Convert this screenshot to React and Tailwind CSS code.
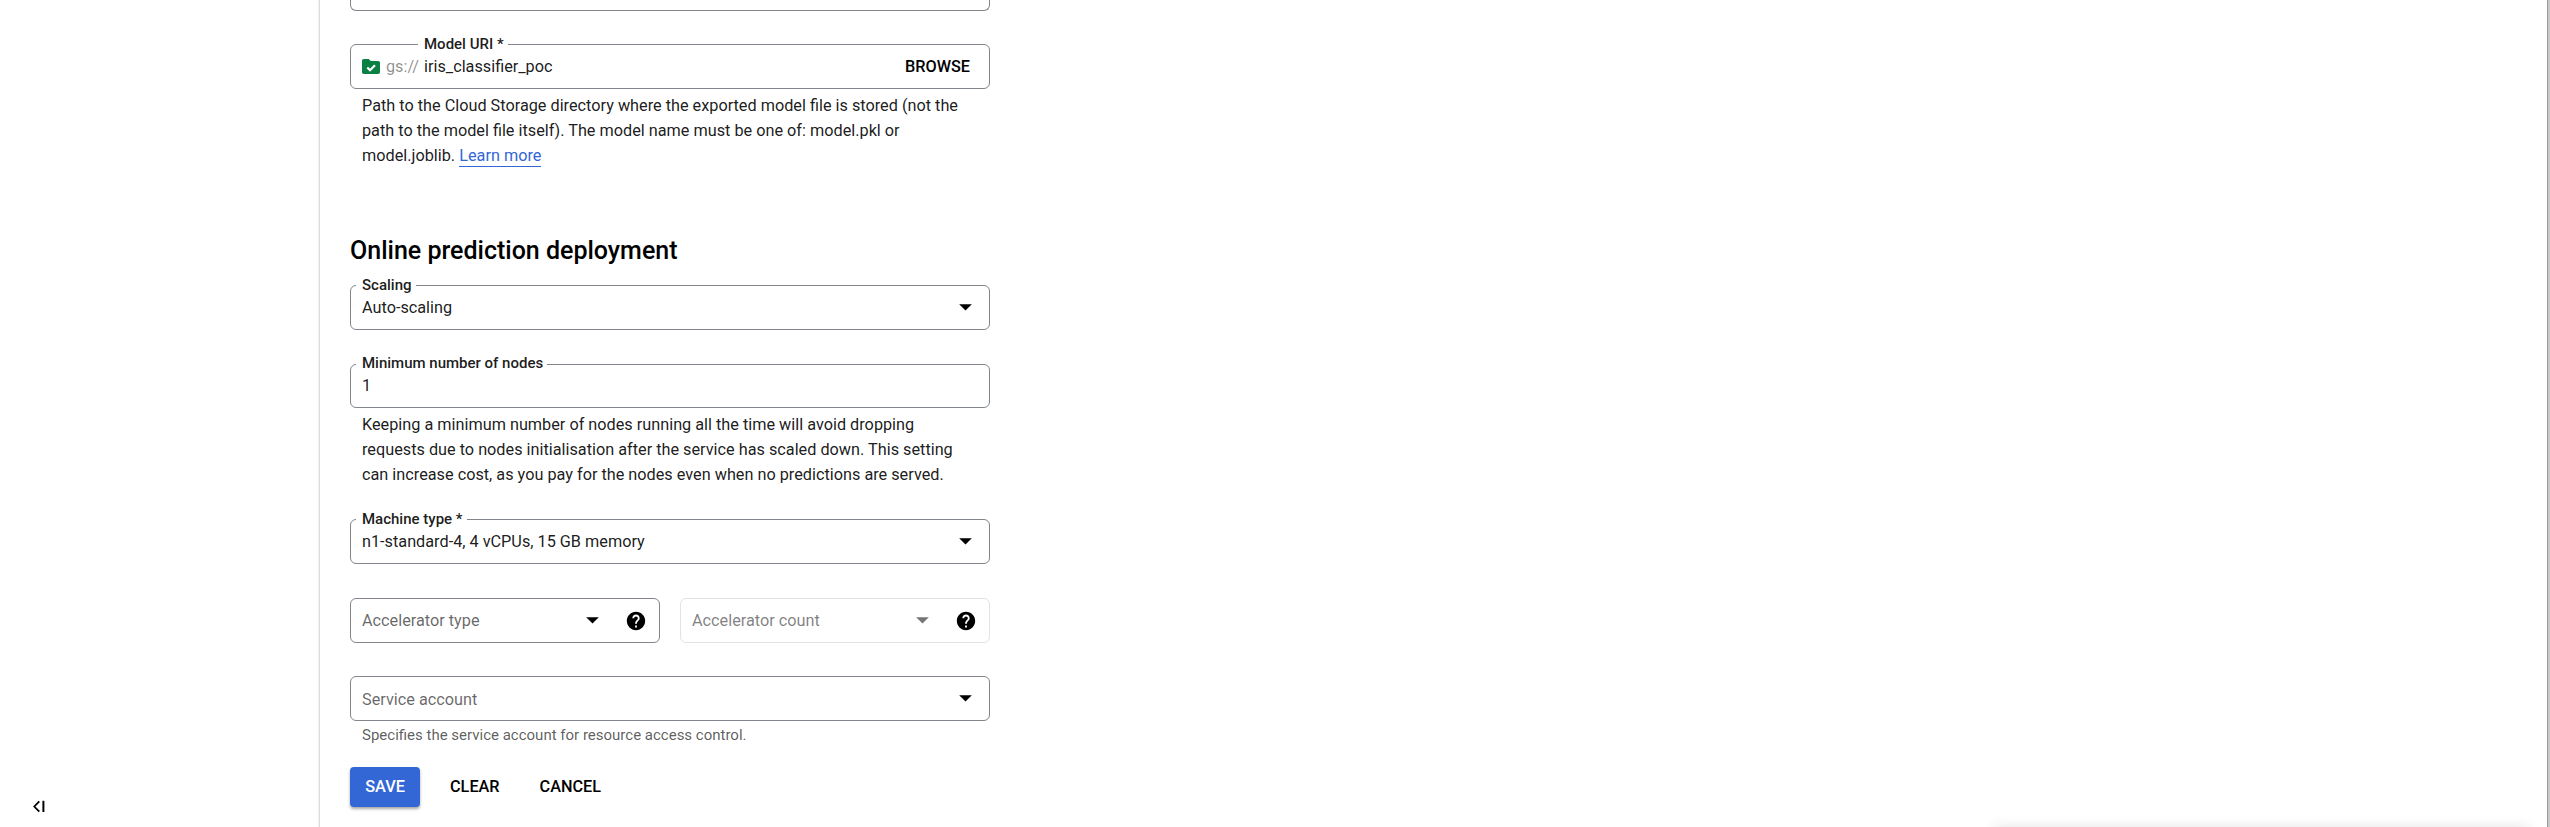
import React from "react";

function Caret({ className = "fill-black" }) {
  return (
    <svg className={`block h-[7px] w-[13px] ${className}`} viewBox="0 0 13 7">
      <path d="M0.2 0.2h12.6L6.5 6.6z" />
    </svg>
  );
}

function Help() {
  return (
    <svg className="block h-[22px] w-[22px] fill-black" viewBox="0 0 24 24">
      <path d="M12 2C6.48 2 2 6.48 2 12s4.48 10 10 10 10-4.48 10-10S17.52 2 12 2zm1 17h-2v-2h2v2zm2.07-7.75l-.9.92C13.45 12.9 13 13.5 13 15h-2v-.5c0-1.1.45-2.1 1.17-2.83l1.24-1.26c.37-.36.59-.86.59-1.41 0-1.1-.9-2-2-2s-2 .9-2 2H8c0-2.21 1.79-4 4-4s4 1.79 4 4c0 .88-.36 1.68-.93 2.25z" />
    </svg>
  );
}

function FolderCheck() {
  return (
    <svg className="block h-[15px] w-[18px]" viewBox="0 0 18 15">
      <path
        d="M1.8 0h5l1.9 1.9h7.5A1.8 1.8 0 0 1 18 3.7v9.5a1.8 1.8 0 0 1-1.8 1.8H1.8A1.8 1.8 0 0 1 0 13.2V1.8A1.8 1.8 0 0 1 1.8 0z"
        fill="#0b8043"
      />
      <path d="M5.3 8.5l2.7 2.7 5-5" fill="none" stroke="#fff" strokeWidth="2.2" />
    </svg>
  );
}

function Field({ label, labelClass = "left-[5px] -top-[10px]", className = "h-[45px]", border = "border-[#80868b]", children }) {
  return (
    <div className={`relative flex items-center rounded-[6px] border pl-[11px] ${border} ${className}`}>
      {label && (
        <span className={`absolute bg-white pl-[6px] pr-[4px] text-[15px] leading-[18px] font-medium whitespace-nowrap ${labelClass}`}>
          {label}
        </span>
      )}
      {children}
    </div>
  );
}

export default function App() {
  return (
    <div className="relative flex h-[827px] w-[2550px] overflow-hidden bg-white font-['Roboto',sans-serif] text-[16.25px] leading-[25px] text-black/90">
      <aside className="flex w-[319px] shrink-0 items-end border-r border-[#f3f3f3] pb-[14px] pl-[33px]">
        <svg className="block h-[13px] w-[12px]" viewBox="0 0 12 13">
          <path d="M6.3 1.3L1.3 6.5l5 5.2" fill="none" stroke="#000" strokeWidth="1.8" />
          <path d="M9.4 0.8h2v11.2h-2z" fill="#000" />
        </svg>
      </aside>

      <main className="flex-1 border-l border-[#dadce0] pl-[30px]">
        <div className="flex w-[640px] flex-col">
          <div className="h-[11px] rounded-b-[6px] border border-t-0 border-[#80868b]" />

          <Field label="Model URI *" labelClass="left-[67px] -top-[10px]" className="mt-[33px] h-[45px]">
            <FolderCheck />
            <span className="ml-[6px] w-[38px] text-black/45">gs://</span>
            <span className="flex-1">iris_classifier_poc</span>
            <button className="mr-[19px] font-medium text-black">BROWSE</button>
          </Field>
          <p className="mt-[4px] pl-[12px]">
            Path to the Cloud Storage directory where the exported model file is stored (not the
            <br />
            path to the model file itself). The model name must be one of: model.pkl or
            <br />
            model.joblib.{" "}
            <a className="border-b border-[#3367d6] pb-px text-[#3367d6]">Learn more</a>
          </p>

          <h2 className="mt-[68px] text-[25px] leading-[30px] font-medium text-black">Online prediction deployment</h2>

          <Field label="Scaling" className="mt-[19px] h-[45px]">
            <span className="flex-1">Auto-scaling</span>
            <div className="mr-[17px]">
              <Caret />
            </div>
          </Field>

          <Field label="Minimum number of nodes" labelClass="left-[5px] -top-[11px]" className="mt-[34px] h-[44px]">
            <span className="pb-px">1</span>
          </Field>
          <p className="mt-[4px] pl-[12px]">
            Keeping a minimum number of nodes running all the time will avoid dropping
            <br />
            requests due to nodes initialisation after the service has scaled down. This setting
            <br />
            can increase cost, as you pay for the nodes even when no predictions are served.
          </p>

          <Field label="Machine type *" className="mt-[32px] h-[45px]">
            <span className="flex-1">n1-standard-4, 4 vCPUs, 15 GB memory</span>
            <div className="mr-[17px]">
              <Caret />
            </div>
          </Field>

          <div className="mt-[34px] flex gap-[20px]">
            <Field className="h-[45px] w-[310px]">
              <span className="flex-1 text-black/60">Accelerator type</span>
              <Caret />
              <div className="mr-[12px] ml-[26px]">
                <Help />
              </div>
            </Field>
            <Field className="h-[45px] w-[310px]" border="border-[#e2e3e4]">
              <span className="flex-1 text-black/50">Accelerator count</span>
              <Caret className="fill-[#757575]" />
              <div className="mr-[12px] ml-[26px]">
                <Help />
              </div>
            </Field>
          </div>

          <Field className="mt-[33px] h-[45px]">
            <span className="flex-1 pt-px text-black/60">Service account</span>
            <div className="mr-[17px]">
              <Caret />
            </div>
          </Field>
          <p className="mt-[4px] pl-[12px] text-[15px] leading-[20px] text-black/65">
            Specifies the service account for resource access control.
          </p>

          <div className="mt-[22px] flex h-[40px] items-center font-medium text-black">
            <button className="h-[40px] w-[70px] rounded-[4px] bg-[#3367d6] pb-[2px] text-white shadow-[0_2px_3px_rgba(0,0,0,0.35)]">SAVE</button>
            <button className="ml-[30px] pb-[2px]">CLEAR</button>
            <button className="ml-[40px] pb-[2px]">CANCEL</button>
          </div>
        </div>
      </main>

      <div className="w-[3px] shrink-0 border-l border-[#9b9b9b] bg-[#c9c9c9]" />
      <div className="absolute top-[827px] left-[1994px] h-[20px] w-[535px] shadow-[0_0_14px_rgba(0,0,0,0.11)]" />
    </div>
  );
}
